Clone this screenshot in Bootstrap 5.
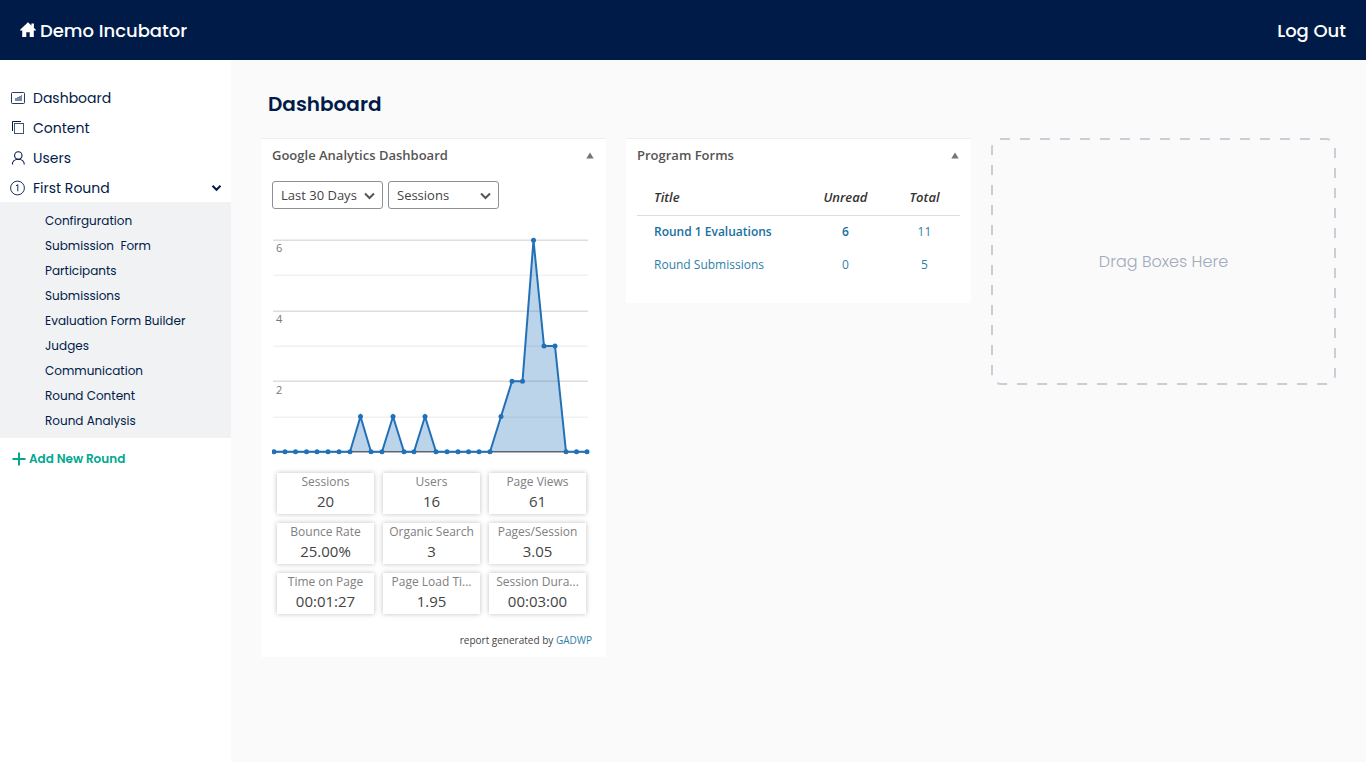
<!DOCTYPE html>
<html lang="en">
<head>
<meta charset="utf-8">
<meta name="viewport" content="width=device-width, initial-scale=1">
<title>Dashboard - Demo Incubator</title>
<link rel="stylesheet" href="https://cdn.jsdelivr.net/npm/bootstrap@5.3.0/dist/css/bootstrap.min.css">
<style>
  :root { --navy: #001b48; --teal: #00a88f; --link: #2e7fa8; }
  body { font-family: Poppins, Inter, sans-serif; background: #fafafa; color: var(--navy); }
  a { text-decoration: none; color: inherit; }
  .topbar { background: var(--navy); height: 60px; font-size: 18px; font-weight: 500; color: #fff; }
  .sidebar { flex: 0 0 231px; font-size: 14px; padding-top: 22px; }
  .side-link { height: 30px; padding: 2px 9px 0 10px; gap: 8px; }
  .side-link svg { flex: none; }
  .submenu { background: #f1f2f4; font-size: 12px; padding: 6px 0 5px 45px; }
  .submenu a { display: block; line-height: 25px; white-space: pre; }
  .add-round { color: var(--teal); font-size: 12px; font-weight: 600; padding-left: 12px; margin-top: 6px; height: 30px; gap: 3px; }
  .page { padding: 30px 30px 40px; }
  .page-title { font-size: 20px; font-weight: 600; line-height: 28px; margin: 0 0 20px 7px; }
  .boards { --bs-gutter-x: 20px; --bs-gutter-y: 20px; }
  .panel { background: #fff; border-top: 1px solid #eee; font-family: "Open Sans", sans-serif; color: #444; padding: 0 11px; }
  .panel-title { font-size: 13px; font-weight: 600; line-height: 20px; margin: 0; color: #555; }
  .panel-head { padding: 0 1px 2px 0; height: 34px; }
  .toggle { border: 0; padding: 0; background: none; line-height: 0; }
  .filters { gap: 5px; }
  .filter { width: 111px; height: 28px; font-size: 13px; line-height: 18px; color: #444; padding: 0 20px 0 8px; border: 1px solid #8c9196; border-radius: 3px; background-position: right 6px center; background-size: 13px 13px;
    background-image: url("data:image/svg+xml,%3Csvg xmlns='http://www.w3.org/2000/svg' viewBox='0 0 13 13'%3E%3Cpath d='M2 4.5l4.500 4.500 4.500-4.500' fill='none' stroke='%23555' stroke-width='2'/%3E%3C/svg%3E"); }
  .chart { display: block; width: 100%; margin-top: 22px; }
  .stats { display: grid; grid-template-columns: repeat(3, minmax(0, 1fr)); gap: 9px; padding: 13px 9px 0 5px; }
  .stat { height: 41px; text-align: center; box-shadow: 0 0 5px rgba(0,0,0,.25); padding: 0 4px; }
  .stat dt { font-size: 12px; font-weight: 400; line-height: 18px; color: #808080; }
  .stat dd { font-size: 15px; line-height: 20px; margin: 0; }
  .credit { font-size: 10px; line-height: 14px; padding: 19px 3px 10px 0; }
  .panel a { color: var(--link); }
  .forms-panel { padding-bottom: 22px; }
  .forms { font-size: 12px; }
  .forms th, .forms td { border: 0; padding: 0 0 0 17px; height: 33px; background: none; color: inherit; vertical-align: middle; }
  .forms th { font-size: 13px; font-style: italic; font-weight: 600; color: #333; height: 34px; }
  .forms thead { border-bottom: 1px solid #ddd; }
  .forms .num { text-align: center; padding: 0; }
  .forms .unread a { font-weight: 600; color: #17709f; }
  .dropzone { display: grid; font-size: 16px; font-weight: 300; color: #a1abbd; }
  .dropzone > * { grid-area: 1 / 1; }
</style>
</head>
<body class="d-flex flex-column min-vh-100">
<header class="topbar d-flex align-items-center justify-content-between px-3">
  <a href="#" class="d-flex align-items-center gap-1 ms-1">
    <svg width="16" height="16" viewBox="0 0 16 16" fill="#fff" aria-hidden="true"><path d="M8 .3L.1 7.800V8.500H2.200V15H6.300V10.300H9.700V15H13.800V8.500H15.900V7.800L13.900 5.900V1.500H11.400V3.500Z"/></svg>
    <span>Demo Incubator</span>
  </a>
  <a href="#" class="me-1">Log Out</a>
</header>
<div class="d-flex flex-grow-1">
  <nav class="sidebar bg-white" aria-label="Main">
    <a href="#" class="side-link d-flex align-items-center">
      <svg width="15" height="14" viewBox="0 0 15 14" aria-hidden="true"><rect x="1.500" y="1.500" width="13" height="11" rx="1" fill="none" stroke="#001b48" stroke-opacity=".85"/><path d="M5 10V7h2V6h2V5h2V4h1v6z" fill="#7f8ba5"/></svg>
      Dashboard</a>
    <a href="#" class="side-link d-flex align-items-center">
      <svg width="15" height="16" viewBox="0 0 15 16" fill="none" stroke="#001b48" aria-hidden="true"><path d="M2.500 11V1.500H11"/><rect x="4.500" y="3.500" width="9" height="10" stroke-opacity=".75"/></svg>
      Content</a>
    <a href="#" class="side-link d-flex align-items-center">
      <svg width="15" height="16" viewBox="0 0 15 16" fill="none" stroke="#001b48" stroke-width="1.100" aria-hidden="true"><circle cx="8.300" cy="5.500" r="3.700"/><path d="M2.300 14.500C2.300 11.500 4.800 9.200 8.300 9.200S14.300 11.500 14.300 14.500"/></svg>
      Users</a>
    <a href="#" class="side-link d-flex align-items-center" aria-expanded="true">
      <svg width="15" height="16" viewBox="0 0 15 16" fill="none" stroke="#001b48" stroke-width=".9" aria-hidden="true"><circle cx="7.500" cy="8" r="6.900"/><path d="M6 5.800L7.800 4.700V11.300"/></svg>
      First Round
      <svg class="ms-auto" width="11" height="8" viewBox="0 0 11 8" aria-hidden="true"><path d="M1.500 1.800L5.500 5.800 9.500 1.800" fill="none" stroke="#001b48" stroke-width="2"/></svg></a>
    <div class="submenu">
      <a href="#">Confirguration</a>
      <a href="#">Submission  Form</a>
      <a href="#">Participants</a>
      <a href="#">Submissions</a>
      <a href="#">Evaluation Form Builder</a>
      <a href="#">Judges</a>
      <a href="#">Communication</a>
      <a href="#">Round Content</a>
      <a href="#">Round Analysis</a>
    </div>
    <a href="#" class="add-round d-flex align-items-center">
      <svg width="14" height="14" viewBox="0 0 14 14" aria-hidden="true"><path d="M7 .5V13.500M.5 7H13.500" stroke="#00a88f" stroke-width="2"/></svg>
      Add New Round</a>
  </nav>
  <main class="page flex-grow-1">
    <h1 class="page-title">Dashboard</h1>
    <div class="row boards">
      <div class="col-4">
        <section class="panel">
          <div class="panel-head d-flex align-items-center justify-content-between">
            <h2 class="panel-title">Google Analytics Dashboard</h2>
            <button type="button" class="toggle" aria-label="Collapse Google Analytics Dashboard"><svg width="8" height="7" viewBox="0 0 8 7"><path d="M4 .5L7.700 6.500H.3z" fill="#72777c"/></svg></button>
          </div>
          <div class="filters d-flex pt-2">
            <select class="form-select filter" aria-label="Period"><option>Last 30 Days</option></select>
            <select class="form-select filter" aria-label="Metric"><option>Sessions</option></select>
          </div>
          <svg class="chart" viewBox="0 0 323 229" role="img" aria-label="Sessions over the last 30 days">
            <defs><marker id="dot" markerUnits="userSpaceOnUse" markerWidth="6" markerHeight="6" refX="3" refY="3"><circle cx="3" cy="3" r="2.500" fill="#2271b8"/></marker></defs>
            <g transform="translate(0 .8)">
            <path d="M1 43.500H316M1 114.500H316M1 185.500H316" stroke="#f1f1f1" stroke-width="1.500"/>
            <path d="M1 8.500H316M1 79.500H316M1 149.500H316" stroke="#dedede" stroke-width="1.500"/>
            <path d="M1 220H316" stroke="#666" stroke-width="1.500"/>
            <g font-size="11" fill="#777"><text x="4" y="20">6</text><text x="4" y="91">4</text><text x="4" y="162">2</text></g>
            <polygon points="78,220 88.500,184.700 99,220 110,220 121,184.700 132,220 142,220 153,184.700 164,220 218,220 229,184.700 240,149.500 250.500,149.500 261.500,8.500 272,114.200 283,114.200 294,220" fill="#2271b8" fill-opacity=".3"/>
            <polyline fill="none" stroke="#2271b8" stroke-width="2" marker-start="url(#dot)" marker-mid="url(#dot)" marker-end="url(#dot)" points="2,220 13,220 23.500,220 34.500,220 45,220 56,220 67,220 78,220 88.500,184.700 99,220 110,220 121,184.700 132,220 142,220 153,184.700 164,220 175,220 186,220 196.500,220 207,220 218,220 229,184.700 240,149.500 250.500,149.500 261.500,8.500 272,114.200 283,114.200 294,220 304.500,220 315,220"/>
            </g>
          </svg>
          <dl class="stats mb-0">
            <div class="stat"><dt class="text-truncate">Sessions</dt><dd>20</dd></div>
            <div class="stat"><dt class="text-truncate">Users</dt><dd>16</dd></div>
            <div class="stat"><dt class="text-truncate">Page Views</dt><dd>61</dd></div>
            <div class="stat"><dt class="text-truncate">Bounce Rate</dt><dd>25.00%</dd></div>
            <div class="stat"><dt class="text-truncate">Organic Search</dt><dd>3</dd></div>
            <div class="stat"><dt class="text-truncate">Pages/Session</dt><dd>3.05</dd></div>
            <div class="stat"><dt class="text-truncate">Time on Page</dt><dd>00:01:27</dd></div>
            <div class="stat"><dt class="text-truncate">Page Load Ti...</dt><dd>1.95</dd></div>
            <div class="stat"><dt class="text-truncate">Session Dura...</dt><dd>00:03:00</dd></div>
          </dl>
          <div class="credit text-end">report generated by <a href="#">GADWP</a></div>
        </section>
      </div>
      <div class="col-4">
        <section class="panel forms-panel">
          <div class="panel-head d-flex align-items-center justify-content-between">
            <h2 class="panel-title">Program Forms</h2>
            <button type="button" class="toggle" aria-label="Collapse Program Forms"><svg width="8" height="7" viewBox="0 0 8 7"><path d="M4 .5L7.700 6.500H.3z" fill="#72777c"/></svg></button>
          </div>
          <table class="table forms mt-2 mb-0">
            <colgroup><col><col style="width:27%"><col style="width:22%"></colgroup>
            <thead><tr><th>Title</th><th class="num">Unread</th><th class="num">Total</th></tr></thead>
            <tbody>
              <tr><td class="unread"><a href="#">Round 1 Evaluations</a></td><td class="num unread"><a href="#">6</a></td><td class="num"><a href="#">11</a></td></tr>
              <tr><td><a href="#">Round Submissions</a></td><td class="num"><a href="#">0</a></td><td class="num"><a href="#">5</a></td></tr>
            </tbody>
          </table>
        </section>
      </div>
      <div class="col-4">
        <div class="dropzone">
          <svg class="w-100" viewBox="0 0 345 247" fill="none" stroke="#c8cdd8" stroke-width="2" stroke-dasharray="10 10" aria-hidden="true"><path d="M1 237V10A9 9 0 0 1 10 1H335A9 9 0 0 1 344 10V237A9 9 0 0 1 335 246H10A9 9 0 0 1 1 237"/></svg>
          <span class="align-self-center text-center">Drag Boxes Here</span>
        </div>
      </div>
    </div>
  </main>
</div>
<script src="https://cdn.jsdelivr.net/npm/bootstrap@5.3.0/dist/js/bootstrap.bundle.min.js"></script>
</body>
</html>
